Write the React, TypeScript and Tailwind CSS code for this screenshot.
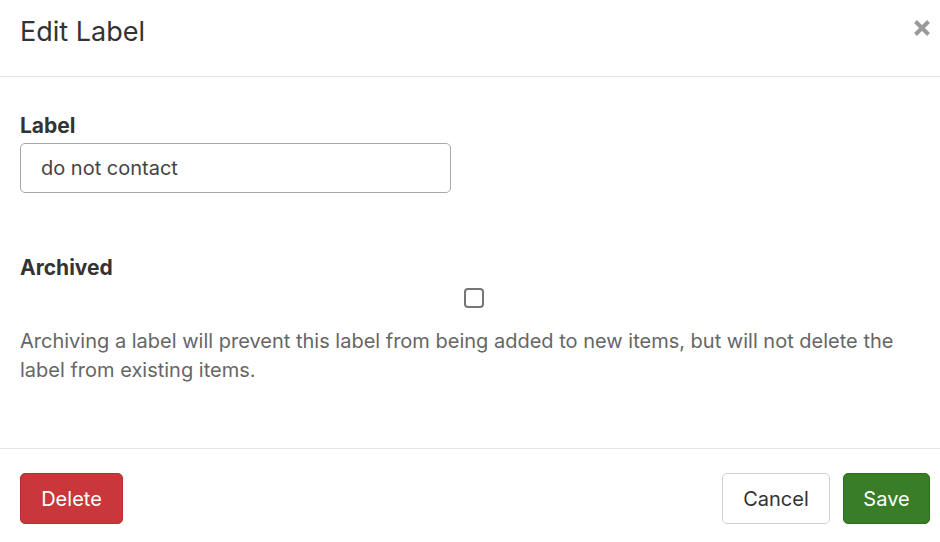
import React, { useState } from 'react';

export default function App() {
  const [label, setLabel] = useState('do not contact');
  const [archived, setArchived] = useState(false);

  return (
    <div className="w-[940px] h-[542px] bg-white flex flex-col text-[#333] font-['Inter','Liberation_Sans',sans-serif]">
      <div className="h-[77px] px-5 flex items-center justify-between border-b border-[#e5e5e5]">
        <h2 className="text-[27px] font-normal text-[#333] leading-none -mt-[14px]">Edit Label</h2>
        <button className="text-[#9a9a9a] -mt-[20px] -mr-[11px]" aria-label="Close">
          <svg width="18" height="18" viewBox="0 0 18 18">
            <path d="M2.5 2.5 L15.5 15.5 M15.5 2.5 L2.5 15.5" stroke="currentColor" strokeWidth="4" strokeLinecap="butt" />
          </svg>
        </button>
      </div>

      <div className="flex-1 px-5 pt-[35px] border-b border-[#e5e5e5]">
        <label className="block text-[21px] font-bold text-[#333] leading-[28px] mb-[3px]">Label</label>
        <input
          value={label}
          onChange={(e) => setLabel(e.target.value)}
          className="w-[431px] h-[50px] px-5 text-[20px] text-[#444] border border-[#a9a9a9] rounded-[5px] outline-none"
        />

        <label className="block text-[21px] font-bold text-[#333] leading-[28px] mt-[61px]">Archived</label>
        <div className="flex justify-center pl-[8px] mt-[6px]">
          <input
            type="checkbox"
            checked={archived}
            onChange={(e) => setArchived(e.target.checked)}
            className="appearance-none w-[20px] h-[20px] border-[2px] border-[#767676] rounded-[4px] bg-white"
          />
        </div>
        <p className="text-[20px] text-[#666] leading-[29px] mt-[19px]">
          Archiving a label will prevent this label from being added to new items, but will not delete the label from existing items.
        </p>
      </div>

      <div className="h-[93px] pl-5 pr-[10px] pt-[6px] flex items-center justify-between">
        <button className="h-[51px] w-[103px] rounded-[5px] bg-[#c9373a] text-white text-[20px] border border-[#b83033]">Delete</button>
        <div className="flex gap-[13px]">
          <button className="h-[51px] w-[108px] rounded-[5px] bg-white text-[#333] text-[20px] border border-[#cfcfcf]">Cancel</button>
          <button className="h-[51px] w-[87px] rounded-[5px] bg-[#397d27] text-white text-[20px] border border-[#2f6e1f]">Save</button>
        </div>
      </div>
    </div>
  );
}
